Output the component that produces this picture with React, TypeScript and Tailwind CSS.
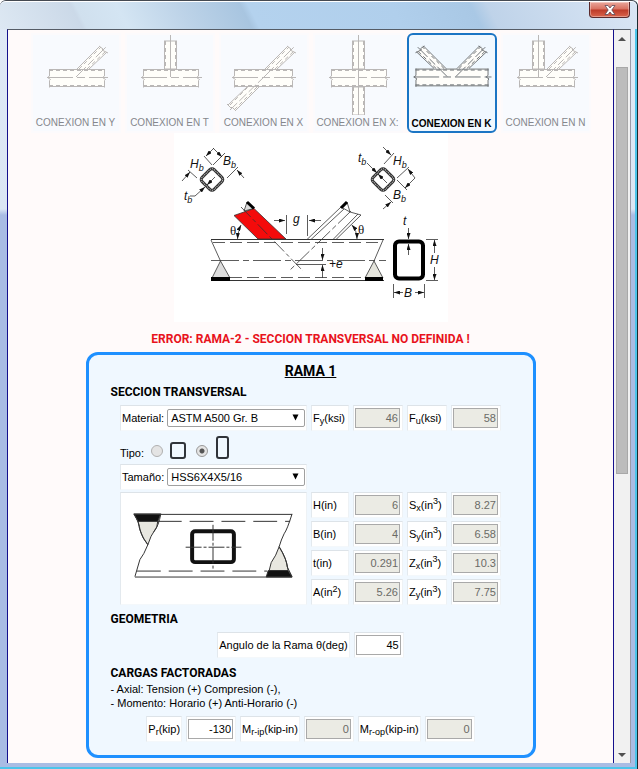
import React, { useState, type ReactNode } from "react";
import { clsx } from "clsx";

type Brace = "Y" | "T" | "X" | "XX" | "K" | "N";

const CONNECTIONS: { id: Brace; label: string }[] = [
  { id: "Y", label: "CONEXION EN Y" },
  { id: "T", label: "CONEXION EN T" },
  { id: "X", label: "CONEXION EN X" },
  { id: "XX", label: "CONEXION EN X:" },
  { id: "K", label: "CONEXION EN K" },
  { id: "N", label: "CONEXION EN N" },
];

function Chord({ x1, x2 }: { x1: number; x2: number }) {
  return (
    <g>
      <rect x={x1} y={36} width={x2 - x1} height={18} fill="#fffefa" stroke="none" />
      <path d={`M${x1} 36.5H${x2}M${x1} 53.5H${x2}`} />
      <path d={`M${x1} 37.5H${x2}M${x1} 52.5H${x2}`} strokeDasharray="4 3" />
      <path d={`M${x1 + 0.5} 36v7l-2 1.5l3 2l-1 1v7M${x2 - 0.5} 36v7l-2 1.5l3 2l-1 1v7`} />
      <path d={`M${x1 - 2} 44.5H${x2 + 3}`} strokeDasharray="26 4 8 4" />
    </g>
  );
}

function Post({ x, y1, y2 }: { x: number; y1: number; y2: number }) {
  return (
    <g>
      <rect x={x - 5.5} y={y1} width={12} height={y2 - y1} fill="#fffefa" />
      <path d={`M${x - 4.5} ${y1}V${y2}M${x + 5.5} ${y1}V${y2}`} strokeDasharray="4 3" />
    </g>
  );
}

function Diagonal({ flip = false, at }: { flip?: boolean; at: number }) {
  const d = flip ? -1 : 1;
  const p = (x: number) => at + d * x;
  return (
    <g>
      <path d={`M${p(0)} 36L${p(23)} 13L${p(30)} 19L${p(12)} 36Z`} fill="#fffefa" stroke="none" />
      <path d={`M${p(0)} 36L${p(23)} 13M${p(12)} 36L${p(30)} 19`} />
      <path d={`M${p(2)} 36L${p(24)} 14M${p(10)} 36L${p(29)} 18`} strokeDasharray="4 3" />
      <path d={`M${p(22)} 13L${p(26)} 16L${p(25)} 17L${p(31)} 20`} />
      <path d={`M${p(-1)} 44L${p(30)} 13`} strokeDasharray="14 3 8 3" />
    </g>
  );
}

function ConnectionDrawing({ kind, active }: { kind: Brace; active: boolean }) {
  return (
    <svg
      viewBox="2 2 86 80"
      className={clsx("h-20 w-full", active ? "text-[#6f7478]" : "text-[#bab7b6]")}
      fill="none"
      stroke="currentColor"
      strokeWidth="1"
      aria-hidden="true"
    >
      {kind === "K" ? <Chord x1={8} x2={82} /> : <Chord x1={kind === "X" ? 15 : 18} x2={74} />}
      {kind === "Y" && <Diagonal at={46} />}
      {kind === "T" && (
        <>
          <Post x={45} y1={8} y2={36} />
          <path d="M45.5 2V44" />
        </>
      )}
      {kind === "X" && (
        <>
          <path d="M9 72L28 54H40L16 78Z" fill="#fffefa" stroke="none" />
          <path d="M9 72L28 54M40 54L16 78M8 71l4 4l1-1l4 4" />
          <path d="M11 72L29 54M38 54L15 77" strokeDasharray="4 3" />
          <path d="M11 77L46 43" strokeDasharray="10 3" />
          <Diagonal at={46} />
        </>
      )}
      {kind === "XX" && (
        <>
          <Post x={45} y1={8} y2={36} />
          <Post x={45} y1={54} y2={82} />
          <path d="M45.5 2V84" />
        </>
      )}
      {kind === "K" && (
        <>
          <Diagonal at={50} />
          <Diagonal at={39} flip />
        </>
      )}
      {kind === "N" && (
        <>
          <Post x={37} y1={8} y2={36} />
          <path d="M37.5 2V44" />
          <Diagonal at={46} />
        </>
      )}
    </svg>
  );
}

function Sub({ x, y, a, b }: { x: number; y: number; a: string; b?: string }) {
  return (
    <text
      x={x}
      y={y}
      fontSize="12"
      fontStyle="italic"
      fontFamily="'Liberation Sans', Arial, sans-serif"
      fill="#111"
      stroke="none"
    >
      {a}
      {b && (
        <tspan fontSize="9" dy="3">
          {b}
        </tspan>
      )}
    </text>
  );
}

function Arrows({ paths }: { paths: string[] }) {
  return (
    <>
      {paths.map((d) => (
        <path key={d} d={d} markerEnd="url(#tip)" />
      ))}
    </>
  );
}

function JointDiagram() {
  return (
    <svg
      viewBox="174 133 274 189"
      className="h-[189px] w-[274px] bg-white"
      fill="none"
      stroke="#333"
      strokeWidth="0.8"
      role="img"
      aria-label="Conexion en K"
    >
      <defs>
        <marker id="tip" viewBox="0 0 6 4" refX="6" refY="2" markerWidth="6" markerHeight="4" markerUnits="userSpaceOnUse" orient="auto-start-reverse">
          <path d="M0 0L6 2L0 4Z" fill="#111" stroke="none" />
        </marker>
      </defs>

      <path d="M211 239.5H384M211 280.5H384" strokeWidth="1" />
      <path d="M213 242.5H382M230 277.5H366" strokeDasharray="12 5" />
      <path d="M211 260.5H386" strokeDasharray="28 4 6 4" />
      <path d="M220.5 261L212 278H230Z" fill="#ddd" />
      <path d="M374 261L365 278H383Z" fill="#e4e4dc" />
      <path d="M211 240L220.5 261M383 240L374 261" />
      <path d="M211 277H230V281H211ZM365 277H383V281H365Z" fill="#000" stroke="none" />

      <path d="M247 202L244 211L254 208.5Z" fill="#ddd" />
      <path d="M234 215.5L254 208.5L286 239H258Z" fill="#f40b0b" />
      <path d="M247 202L254 208.5" stroke="#000" strokeWidth="3" />
      <path d="M241 207L303 271" strokeDasharray="14 3 4 3" />
      <path d="M351 211L289 271" strokeDasharray="18 3 5 3" />

      <path d="M307 239.5L341 207L347 202L350 212L341 207M311 239.5L344 209M333 239.5L358 214M336 239.5L361 215L350 212" />
      <path d="M341 208L347 202" stroke="#000" strokeWidth="3" />

      <path d="M241 225Q238 231 237.5 239" markerStart="url(#tip)" markerEnd="url(#tip)" />
      <path d="M352 225Q357 231 357 239" markerStart="url(#tip)" markerEnd="url(#tip)" />
      <path d="M286.5 215V234M307.5 215V236M296 264.5H326" />
      <Arrows paths={["M274 220.5H285", "M321 220.5H309", "M322.5 248V260", "M322.5 278V265"]} />
      <g fontFamily="'Liberation Serif', serif" fontSize="13" fill="#111" stroke="none">
        <text x="230" y="235">θ</text>
        <text x="358" y="234">θ</text>
      </g>
      <Sub x={293} y={223} a="g" />
      <Sub x={329} y={268} a="+e" />

      <rect x="395" y="241.5" width="28" height="37" rx="4" stroke="#000" strokeWidth="4" />
      <path d="M426 239.5H438M426 280.5H438M393.5 284V298M424.5 284V298" />
      <Arrows
        paths={[
          "M408.5 228V239",
          "M408.5 255V244",
          "M434.5 253V240",
          "M434.5 267V280",
          "M403 292.5H394",
          "M415 292.5H424",
        ]}
      />
      <Sub x={403} y={225} a="t" />
      <Sub x={430} y={264} a="H" />
      <Sub x={404} y={297} a="B" />

      <g>
        <rect x="203.5" y="171" width="17" height="17" rx="3" transform="rotate(45 212 179.5)" strokeWidth="3" />
        <rect x="203.5" y="171" width="17" height="17" rx="3" transform="rotate(45 212 179.5)" stroke="#ccc" strokeWidth="1" strokeDasharray="1 1" />
        <path d="M188 170L197 178M204 156L212 165M225 153L213 165M238 167L227 178" />
        <Arrows
          paths={[
            "M182 181L190 172",
            "M214 148L206 156",
            "M213 148L222 157",
            "M244 178L237 170",
            "M190 196H195L205 187",
            "M215 177L207 185",
          ]}
        />
        <Sub x={190} y={168} a="H" b="b" />
        <Sub x={223} y={165} a="B" b="b" />
        <Sub x={184} y={200} a="t" b="b" />
      </g>

      <g>
        <rect x="374.5" y="171" width="17" height="17" rx="3" transform="rotate(45 383 179.5)" strokeWidth="3" />
        <rect x="374.5" y="171" width="17" height="17" rx="3" transform="rotate(45 383 179.5)" stroke="#ccc" strokeWidth="1" strokeDasharray="1 1" />
        <path d="M394 153L384 164M409 167L397 178M397 180L407 190M385 195L393 203" />
        <Arrows
          paths={[
            "M383 147L391 155",
            "M415 178L408 169",
            "M415 178L405 188",
            "M383 209L391 202",
            "M367 163L377 173",
            "M387 183L378 174",
          ]}
        />
        <Sub x={358} y={162} a="t" b="b" />
        <Sub x={393} y={165} a="H" b="b" />
        <Sub x={393} y={199} a="B" b="b" />
      </g>
    </svg>
  );
}

function MemberDrawing() {
  return (
    <svg viewBox="121 493 186 112" className="h-full w-full" fill="none" stroke="#333" strokeWidth="1" role="img" aria-label="Orientacion de la seccion">
      <path d="M138 521H158L157 527Q150 537 148 545Q140 535 138 521Z" fill="#e8e7e0" />
      <path d="M270 571H289Q288 560 280 547Q277 556 272 563Z" fill="#e8e7e0" />
      <path d="M134 514H161L158 521.5H138ZM267 577.5H293L289 571H269Z" fill="#111" />
      <path d="M134 514.5H293M135 577.5H293" />
      <path d="M134 514Q140 524 140 530Q142 538 148 545Q144 555 140 560L135 577M293 514Q288 530 285 534Q282 540 280 547Q288 560 288 567L293 577M161 514Q159 526 154 532" />
      <path d="M158 521.5H291M137 571.5H268" strokeDasharray="24 8" />
      <rect x="192.5" y="531.5" width="42" height="31" rx="3" stroke="#111" strokeWidth="4" />
      <path d="M213.5 525V569M186 547.5H242" strokeDasharray="16 2 3 2" />
    </svg>
  );
}

function Cell({ className, children }: { className?: string; children: ReactNode }) {
  return (
    <div
      className={clsx(
        "flex min-h-[26px] items-center border border-t-[#dde3e8] border-r-[#eef2f5] border-b-[#f4f8fb] border-l-[#e3e9ee] bg-white",
        className,
      )}
    >
      {children}
    </div>
  );
}

function Small({ up, children }: { up?: boolean; children: ReactNode }) {
  return up ? <sup className="text-[9px]">{children}</sup> : <sub className="text-[9px]">{children}</sub>;
}

function Field({ id, label, value, editable }: { id: string; label: ReactNode; value: string; editable?: boolean }) {
  return (
    <>
      <Cell className="px-px whitespace-nowrap">
        <label htmlFor={id}>{label}</label>
      </Cell>
      <Cell className="w-[50px] px-px">
        <input
          id={id}
          defaultValue={value}
          disabled={!editable}
          className="h-5 w-[45px] border border-[#a9a9a9] bg-white px-px text-right text-[11px] text-black disabled:bg-[#ebebe4] disabled:text-[#6a6a66]"
        />
      </Cell>
    </>
  );
}

function Picker({ id, label, options }: { id: string; label: string; options: string[] }) {
  return (
    <Cell className="gap-[3px] px-px">
      <label htmlFor={id} className="whitespace-nowrap">
        {label}
      </label>
      <div className="relative w-[138px]">
        <select id={id} className="block h-[18px] w-full appearance-none rounded-xs border border-[#a0a0a0] bg-white pl-[3px] text-[11px] text-black">
          {options.map((o) => (
            <option key={o}>{o}</option>
          ))}
        </select>
        <svg viewBox="0 0 7 7" className="pointer-events-none absolute top-[5px] right-1.5 size-[7px]" aria-hidden="true">
          <path d="M0.5 0.5H6.5L3.5 6.5Z" fill="#000" />
        </svg>
      </div>
    </Cell>
  );
}

function Heading({ children }: { children: ReactNode }) {
  return <h3 className="pl-[22px] font-[Roboto,sans-serif] text-xs leading-[18px] font-bold">{children}</h3>;
}

const radioStyle =
  "size-3 appearance-none rounded-full border border-[#b0b0b0] bg-[#e4e4e4] checked:border-[#999] checked:bg-[radial-gradient(circle,#555_0_2px,#e4e4e4_3px)]";

function ScrollArrow({ down }: { down?: boolean }) {
  return (
    <button type="button" aria-label={down ? "Bajar" : "Subir"} className="flex h-[17px] w-full items-center justify-center">
      <svg viewBox="0 0 8 4" className="h-1 w-2">
        <path d={down ? "M0 0H8L4 4Z" : "M0 4H8L4 0Z"} fill="#505050" />
      </svg>
    </button>
  );
}

export default function App() {
  const [selected, setSelected] = useState<Brace>("K");

  return (
    <div className="flex min-h-screen flex-col rounded-t-md border-t border-r border-t-[#454a52] border-r-[#1c2a30] bg-[#b3c8e2] font-['Liberation_Sans',Arial,sans-serif] text-[11px] text-black">
      <header className="flex h-7 justify-end rounded-t-md border-t border-white bg-[linear-gradient(63deg,#dde8f3_0px,#cbd9e8_74px,#d0e0ee_78px,#d4e5f3_115px,#bdd3e8_170px,#a8c5e0_225px,#b4d2ee_232px,#b0cfec_360px,#a9c8e5_430px,#bfd3e9_445px,#dae6f5_582px)] pr-[7px]">
        <button
          type="button"
          aria-label="Cerrar"
          className="flex h-4 w-[41px] items-center justify-center rounded-b border border-t-0 border-[#5b2a2c] bg-[linear-gradient(#e9a79b,#d8705f_48%,#bd3a28_52%,#d9644c)] shadow-[inset_0_0_0_1px_rgba(255,255,255,0.35)]"
        >
          <svg viewBox="0 0 12 10" className="h-[10px] w-3">
            <path d="M1 0.5H4L6 3L8 0.5H11L7.8 5L11 9.5H8L6 7L4 9.5H1L4.2 5Z" fill="#fff" stroke="#5a4a58" strokeWidth="0.8" />
          </svg>
        </button>
      </header>

      <div className="flex flex-1 border-r-2 border-b-2 border-[#4cc4ea] bg-[linear-gradient(#dfe9f6_0px,#dbe6f4_180px,#a9bce4_186px,#a9bce4)] pr-1 pb-1 pl-[7px]">
        <main className="flex flex-1 flex-col items-center border-x border-t border-x-[#14108c] border-t-[#555c66] bg-[#fffafa] pt-[3px] pb-1">
          <nav className="flex gap-1" aria-label="Tipo de conexion">
            {CONNECTIONS.map(({ id, label }) => {
              const active = id === selected;
              return (
                <button
                  key={id}
                  type="button"
                  aria-pressed={active}
                  onClick={() => setSelected(id)}
                  className={clsx(
                    "flex h-[100px] w-[90px] flex-col items-center border-2 text-[10px] leading-[14px] whitespace-nowrap",
                    active
                      ? "rounded-md border-[#1b75c4] bg-[#f0f8ff] font-bold text-black"
                      : "border-[#fcfafc] bg-[#f8fafe] text-[#85878c]",
                  )}
                >
                  <ConnectionDrawing kind={id} active={active} />
                  <span className={active ? "pt-[3px]" : "pt-px"}>{label}</span>
                </button>
              );
            })}
          </nav>

          <JointDiagram />

          <p role="alert" className="mt-2 mb-1 font-[Roboto,sans-serif] text-xs leading-[18px] font-bold text-[#e8121c]">
            ERROR: RAMA-2 - SECCION TRANSVERSAL NO DEFINIDA !
          </p>

          <form className="w-[450px] rounded-xl border-3 border-[#1e90ff] bg-[#f0f8ff] pt-1 pb-[13px]">
            <h2 className="text-center font-[Roboto,sans-serif] text-sm leading-6 font-bold underline">RAMA 1</h2>

            <Heading>SECCION TRANSVERSAL</Heading>
            <div className="mx-auto mt-1 grid w-[381px] grid-cols-[187px_38px_50px_40px_50px] gap-x-1">
              <Picker id="material" label="Material:" options={["ASTM A500 Gr. B"]} />
              <Field id="fy" label={<>F<Small>y</Small>(ksi)</>} value="46" />
              <Field id="fu" label={<>F<Small>u</Small>(ksi)</>} value="58" />

              <fieldset className="col-span-5 flex h-[33px] items-center">
                <span className="w-[31px] pt-3">Tipo:</span>
                <label className="flex items-center gap-[7px] pt-1.5">
                  <input type="radio" name="tipo" aria-label="Cuadrada" className={radioStyle} />
                  <svg viewBox="0 0 16 17" className="h-[17px] w-4" aria-hidden="true">
                    <rect x="1" y="1" width="14" height="15" rx="2" fill="none" stroke="#30343a" strokeWidth="2" />
                  </svg>
                </label>
                <label className="ml-[10px] flex items-center gap-2">
                  <input type="radio" name="tipo" defaultChecked aria-label="Rectangular" className={clsx(radioStyle, "mt-1.5")} />
                  <svg viewBox="0 0 13 23" className="h-[23px] w-[13px]" aria-hidden="true">
                    <rect x="1" y="1" width="11" height="21" rx="2" fill="none" stroke="#30343a" strokeWidth="2" />
                  </svg>
                </label>
              </fieldset>

              <Picker id="tamano" label="Tamaño:" options={["HSS6X4X5/16"]} />
            </div>

            <div className="mx-auto mt-0.5 grid w-[381px] grid-cols-[187px_38px_50px_40px_50px] gap-x-1 gap-y-[3px]">
              <Cell className="row-span-4">
                <MemberDrawing />
              </Cell>
              <Field id="h" label="H(in)" value="6" />
              <Field id="sx" label={<>S<Small>x</Small>(in<Small up>3</Small>)</>} value="8.27" />
              <Field id="b" label="B(in)" value="4" />
              <Field id="sy" label={<>S<Small>y</Small>(in<Small up>3</Small>)</>} value="6.58" />
              <Field id="t" label="t(in)" value="0.291" />
              <Field id="zx" label={<>Z<Small>x</Small>(in<Small up>3</Small>)</>} value="10.3" />
              <Field id="a" label={<>A(in<Small up>2</Small>)</>} value="5.26" />
              <Field id="zy" label={<>Z<Small>y</Small>(in<Small up>3</Small>)</>} value="7.75" />
            </div>

            <div className="mt-[5px]">
              <Heading>GEOMETRIA</Heading>
            </div>
            <div className="mt-1 flex justify-center gap-1">
              <Field id="angulo" label="Angulo de la Rama θ(deg)" value="45" editable />
            </div>

            <div className="mt-1.5">
              <Heading>CARGAS FACTORADAS</Heading>
            </div>
            <p className="pl-[22px] leading-[14px]">
              - Axial: Tension (+) Compresion (-),
              <br />- Momento: Horario (+) Anti-Horario (-)
            </p>
            <div className="mt-1.5 flex justify-center gap-1">
              <Field id="pr" label={<>P<Small>r</Small>(kip)</>} value="-130" editable />
              <Field id="mrip" label={<>M<Small>r-ip</Small>(kip-in)</>} value="0" />
              <Field id="mrop" label={<>M<Small>r-op</Small>(kip-in)</>} value="0" />
            </div>
          </form>
        </main>

        <aside className="flex w-[17px] flex-col border-t border-r border-t-[#555c66] border-r-[#9a9aa8] bg-[#f1f1f1]">
          <ScrollArrow />
          <div className="flex-1 px-0.5 pt-5">
            <div className="h-3/5 border border-[#a8a8a8] bg-[#bcbcbc]" />
          </div>
          <ScrollArrow down />
        </aside>
      </div>
    </div>
  );
}
